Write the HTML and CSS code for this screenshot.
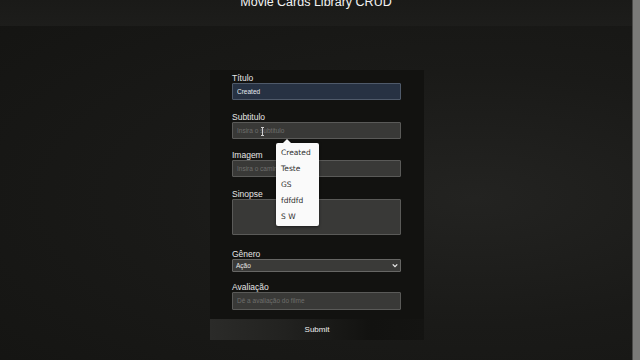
FILE: index.html
```html
<!DOCTYPE html>
<html lang="pt">
<head>
<meta charset="utf-8">
<title>Movie Cards Library CRUD</title>
<link rel="stylesheet" href="styles.css">
</head>
<body>
<div class="page">
  <div class="app">
    <header class="header"><h1 class="title">Movie Cards Library CRUD</h1></header>
    <main class="main">
      <form class="panel">
        <div class="fields">
          <div class="group">
            <label class="label">Título</label>
            <input class="input input-filled" value="Created">
          </div>
          <div class="group group-sub">
            <label class="label">Subtitulo</label>
            <div class="input input-ph">Insira o subtitulo</div>
            <span class="ibeam"></span>
            <div class="suggest">
              <span class="suggest-arrow"></span>
              <div class="suggest-item">Created</div>
              <div class="suggest-item">Teste</div>
              <div class="suggest-item">GS</div>
              <div class="suggest-item">fdfdfd</div>
              <div class="suggest-item">S W</div>
            </div>
          </div>
          <div class="group">
            <label class="label">Imagem</label>
            <div class="input input-ph">Insira o caminho da imagem</div>
          </div>
          <div class="group group-sinopse">
            <label class="label">Sinopse</label>
            <div class="input textarea"></div>
          </div>
          <div class="group group-genero">
            <label class="label">Gênero</label>
            <div class="input select"><span>Ação</span><svg class="chev" viewBox="0 0 8 6" width="6" height="5"><path d="M1 1.5 L4 4.5 L7 1.5" fill="none" stroke="#e8e8e8" stroke-width="1.8"/></svg></div>
          </div>
          <div class="group group-last">
            <label class="label">Avaliação</label>
            <div class="input input-ph input-tall">Dê a avaliação do filme</div>
          </div>
        </div>
        <div class="submit">Submit</div>
      </form>
    </main>
  </div>
  <div class="scrollbar"><div class="scroll-line"></div></div>
</div>
</body>
</html>
```

FILE: styles.css
```css
html, body {
  margin: 0;
  padding: 0;
  width: 640px;
  height: 360px;
  overflow: hidden;
  background: #171715;
  font-family: "Liberation Sans", Arial, sans-serif;
}
.page {
  display: flex;
  width: 640px;
  height: 360px;
}
.app {
  width: 632px;
  height: 360px;
  display: flex;
  flex-direction: column;
  background: radial-gradient(ellipse at 75% 55%, #232321 0%, #1a1a18 45%, #141412 100%);
}
.header {
  height: 26px;
  background: linear-gradient(180deg, #1a1a18, #1d1d1b);
  overflow: hidden;
  flex: none;
}
.title {
  margin: -6px 0 0 0;
  text-align: center;
  color: #f2f2f2;
  font-weight: normal;
  font-size: 12.5px;
  line-height: 16px;
}
.main {
  flex: 1;
  display: flex;
  justify-content: center;
  padding-top: 44px;
}
.panel {
  width: 214px;
  display: flex;
  flex-direction: column;
  margin-left: 2px;
}
.fields {
  background: #121210;
  padding: 3px 23px 9px 22px;
}
.group {
  position: relative;
  display: flex;
  flex-direction: column;
  margin-bottom: 12px;
}
.group-sub { margin-bottom: 11px; }
.group-sinopse { margin-bottom: 14px; }
.group-genero { margin-bottom: 10px; }
.group-last { margin-bottom: 0; }
.label {
  height: 10px;
  line-height: 10px;
  font-size: 8.5px;
  color: #e6e6e6;
}
.input {
  box-sizing: border-box;
  width: 169px;
  height: 17px;
  margin: 0;
  padding: 0 4px;
  background: #393937;
  border: 1px solid #5a5a58;
  border-radius: 1px;
  font-family: "Liberation Sans", Arial, sans-serif;
  font-size: 6.5px;
  line-height: 15px;
  color: #6e6e6c;
  outline: none;
}
.input-filled {
  background: #273243;
  border-color: #4f5a6a;
  color: #e8ecf2;
}
.input-tall { height: 18px; line-height: 16px; }
.textarea { height: 36px; }
.select {
  height: 13px;
  line-height: 11px;
  color: #e8e8e8;
  display: flex;
  justify-content: space-between;
  align-items: center;
  background: #3a3a38;
  border-color: #666664;
  padding: 0 2px 0 3px;
}
.chev { display: block; }
.ibeam {
  position: absolute;
  left: 30px;
  top: 15px;
  width: 1px;
  height: 9px;
  background: #cfcfcf;
}
.ibeam::before, .ibeam::after {
  content: "";
  position: absolute;
  left: -1px;
  width: 3px;
  height: 1px;
  background: #cfcfcf;
}
.ibeam::before { top: 0; }
.ibeam::after { bottom: 0; }
.suggest {
  position: absolute;
  left: 44px;
  top: 31px;
  width: 43px;
  height: 83px;
  box-sizing: border-box;
  padding-top: 2px;
  background: #fafafa;
  border-radius: 2px;
  box-shadow: 0 1px 3px rgba(0,0,0,0.5);
  z-index: 5;
}
.suggest-arrow {
  position: absolute;
  left: 7px;
  top: -4px;
  width: 0;
  height: 0;
  border-left: 4px solid transparent;
  border-right: 4px solid transparent;
  border-bottom: 4px solid #fafafa;
}
.suggest-item {
  height: 16px;
  line-height: 16px;
  padding-left: 5px;
  font-family: "DejaVu Sans", sans-serif;
  font-size: 7.5px;
  color: #2e2e2e;
}
.submit {
  height: 21px;
  line-height: 21px;
  text-align: center;
  color: #f0f0f0;
  font-size: 8px;
  background: linear-gradient(90deg, #2b2b29 0%, #222220 35%, #121210 75%, #141412 100%);
}
.scrollbar {
  width: 8px;
  height: 360px;
  background: #7a7a78;
  position: relative;
}
.scroll-line {
  width: 1px;
  height: 360px;
  background: #4a4a48;
}
```
